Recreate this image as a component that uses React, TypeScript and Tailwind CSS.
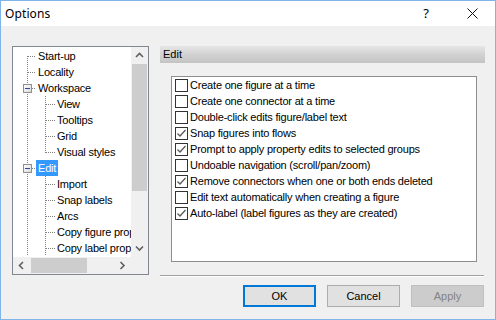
import React from "react";

type TreeRow = {
  label: string;
  level: 0 | 1;
  rv: "full" | "bottom";
  l1?: "full" | "top";
  box?: boolean;
  selected?: boolean;
};

const rows: TreeRow[] = [
  { label: "Start-up", level: 0, rv: "bottom" },
  { label: "Locality", level: 0, rv: "full" },
  { label: "Workspace", level: 0, rv: "full", box: true },
  { label: "View", level: 1, rv: "full", l1: "full" },
  { label: "Tooltips", level: 1, rv: "full", l1: "full" },
  { label: "Grid", level: 1, rv: "full", l1: "full" },
  { label: "Visual styles", level: 1, rv: "full", l1: "top" },
  { label: "Edit", level: 0, rv: "full", box: true, selected: true },
  { label: "Import", level: 1, rv: "full", l1: "full" },
  { label: "Snap labels", level: 1, rv: "full", l1: "full" },
  { label: "Arcs", level: 1, rv: "full", l1: "full" },
  { label: "Copy figure properties", level: 1, rv: "full", l1: "full" },
  { label: "Copy label properties", level: 1, rv: "full", l1: "full" },
];

const checks: { label: string; checked: boolean }[] = [
  { label: "Create one figure at a time", checked: false },
  { label: "Create one connector at a time", checked: false },
  { label: "Double-click edits figure/label text", checked: false },
  { label: "Snap figures into flows", checked: true },
  { label: "Prompt to apply property edits to selected groups", checked: true },
  { label: "Undoable navigation (scroll/pan/zoom)", checked: false },
  { label: "Remove connectors when one or both ends deleted", checked: true },
  { label: "Edit text automatically when creating a figure", checked: false },
  { label: "Auto-label (label figures as they are created)", checked: true },
];

const dot = "#808080";

function RowLines({ r }: { r: TreeRow }) {
  const w = r.level === 0 ? 23 : 42;
  return (
    <svg width={w} height={16} className="shrink-0 block">
      <line x1={14.5} x2={14.5} y1={r.rv === "bottom" ? 8 : 0} y2={16} stroke={dot} strokeDasharray="1 1" />
      {r.level === 0 ? (
        <line x1={r.box ? 19 : 15} x2={23} y1={8.5} y2={8.5} stroke={dot} strokeDasharray="1 1" />
      ) : (
        <>
          <line x1={32.5} x2={32.5} y1={0} y2={r.l1 === "top" ? 9 : 16} stroke={dot} strokeDasharray="1 1" />
          <line x1={33} x2={42} y1={8.5} y2={8.5} stroke={dot} strokeDasharray="1 1" />
        </>
      )}
      {r.box && (
        <>
          <defs>
            <linearGradient id="bx" x1="0" y1="0" x2="1" y2="1">
              <stop offset="0" stopColor="#ffffff" />
              <stop offset="1" stopColor="#d8d8d8" />
            </linearGradient>
          </defs>
          <rect x={10.5} y={4.5} width={8} height={8} fill="url(#bx)" stroke="#8f8f8f" />
          <line x1={12} x2={17} y1={8.5} y2={8.5} stroke="#2b4a9c" />
        </>
      )}
    </svg>
  );
}

function Chevron({ dir }: { dir: "up" | "down" | "left" | "right" }) {
  const pts: Record<string, string> = {
    up: "1,5 4.5,1.5 8,5",
    down: "1,1.5 4.5,5 8,1.5",
    left: "5,1 1.5,4.5 5,8",
    right: "1.5,1 5,4.5 1.5,8",
  };
  const vert = dir === "up" || dir === "down";
  return (
    <svg width={vert ? 9 : 7} height={vert ? 7 : 9} className="block">
      <polyline points={pts[dir]} fill="none" stroke="#606060" strokeWidth={1.6} />
    </svg>
  );
}

function CheckBox({ checked }: { checked: boolean }) {
  return (
    <div className="w-[13px] h-[13px] border border-[#333333] bg-white shrink-0 flex items-center justify-center">
      {checked && (
        <svg width={11} height={11} className="block">
          <polyline points="1.5,5.5 4,8 9.5,2" fill="none" stroke="#5a5a5a" strokeWidth={1.3} />
        </svg>
      )}
    </div>
  );
}

export default function App() {
  return (
    <div className="w-[496px] h-[320px] border border-[#7db4ea] bg-[#f0f0f0] flex flex-col font-['Liberation_Sans',Arial,sans-serif] text-[11px] text-black overflow-hidden">
      {/* Title bar */}
      <div className="h-[25px] bg-white flex items-center shrink-0">
        <span className="pl-[4px] text-[12px] font-['Segoe_UI','Noto_Sans',sans-serif] tracking-[0.1px]">Options</span>
        <div className="ml-auto flex h-full">
          <div className="w-[46px] h-full flex items-center justify-center text-[13px] font-['Noto_Sans',sans-serif]">?</div>
          <div className="w-[46px] h-full flex items-center justify-center">
            <svg width={11} height={11} className="block">
              <line x1={0.5} y1={0.5} x2={10.5} y2={10.5} stroke="#111" strokeWidth={1} />
              <line x1={10.5} y1={0.5} x2={0.5} y2={10.5} stroke="#111" strokeWidth={1} />
            </svg>
          </div>
        </div>
      </div>

      {/* Body */}
      <div className="flex pt-[20px] pl-[11px] pr-[10px] gap-[11px]">
        {/* Tree */}
        <div className="w-[137px] h-[229px] border border-[#828790] bg-white flex flex-col shrink-0">
          <div className="flex h-[210px]">
            <div className="w-[118px] overflow-hidden pt-[1px] tracking-[-0.2px]">
              {rows.map((r) => (
                <div key={r.label} className="flex h-[16px] items-stretch whitespace-nowrap">
                  <RowLines r={r} />
                  <span
                    className={
                      "px-[2px] leading-[16px] h-[16px] " +
                      (r.selected ? "bg-[#3399ff] text-white" : "")
                    }
                  >
                    {r.label}
                  </span>
                </div>
              ))}
            </div>
            <div className="w-[17px] bg-[#f0f0f0] flex flex-col">
              <div className="h-[17px] flex items-center justify-center">
                <Chevron dir="up" />
              </div>
              <div className="h-[127px] mx-[1px] bg-[#cdcdcd]" />
              <div className="flex-1" />
              <div className="h-[17px] flex items-center justify-center">
                <Chevron dir="down" />
              </div>
            </div>
          </div>
          <div className="h-[17px] flex bg-[#f0f0f0]">
            <div className="w-[118px] flex items-center">
              <div className="w-[17px] h-full flex items-center justify-center">
                <Chevron dir="left" />
              </div>
              <div className="ml-[1px] w-[56px] h-[15px] bg-[#cdcdcd]" />
              <div className="flex-1" />
              <div className="w-[17px] h-full flex items-center justify-center">
                <Chevron dir="right" />
              </div>
            </div>
            <div className="w-[17px]" />
          </div>
        </div>

        {/* Right column */}
        <div className="flex flex-col w-[325px]">
          <div className="h-[17px] bg-gradient-to-b from-[#e6e6e6] via-[#d2d2d2] to-[#c4c4c4] flex items-center pl-[3px]">
            Edit
          </div>
          <div className="mt-[13px] ml-[11px] w-[306px] h-[186px] border border-[#8e8e8e] bg-white flex flex-col pl-[3px] tracking-[-0.2px]">
            {checks.map((c) => (
              <div key={c.label} className="h-[16px] flex items-center gap-[2px] whitespace-nowrap">
                <CheckBox checked={c.checked} />
                <span className="leading-[16px]">{c.label}</span>
              </div>
            ))}
          </div>
          <div className="mt-[13px] w-[324px] h-[2px] border-t border-[#a0a0a0] border-b border-b-white" />
          <div className="mt-[8px] flex justify-end gap-[11px] pr-[1px]">
            <button className="w-[73px] h-[22px] border-2 border-[#0078d7] bg-[#e1e1e1] flex items-center justify-center">
              OK
            </button>
            <button className="w-[73px] h-[22px] border border-[#adadad] bg-[#e1e1e1] flex items-center justify-center">
              Cancel
            </button>
            <button className="w-[73px] h-[22px] border border-[#bfbfbf] bg-[#cccccc] text-[#838383] flex items-center justify-center">
              Apply
            </button>
          </div>
        </div>
      </div>
    </div>
  );
}
